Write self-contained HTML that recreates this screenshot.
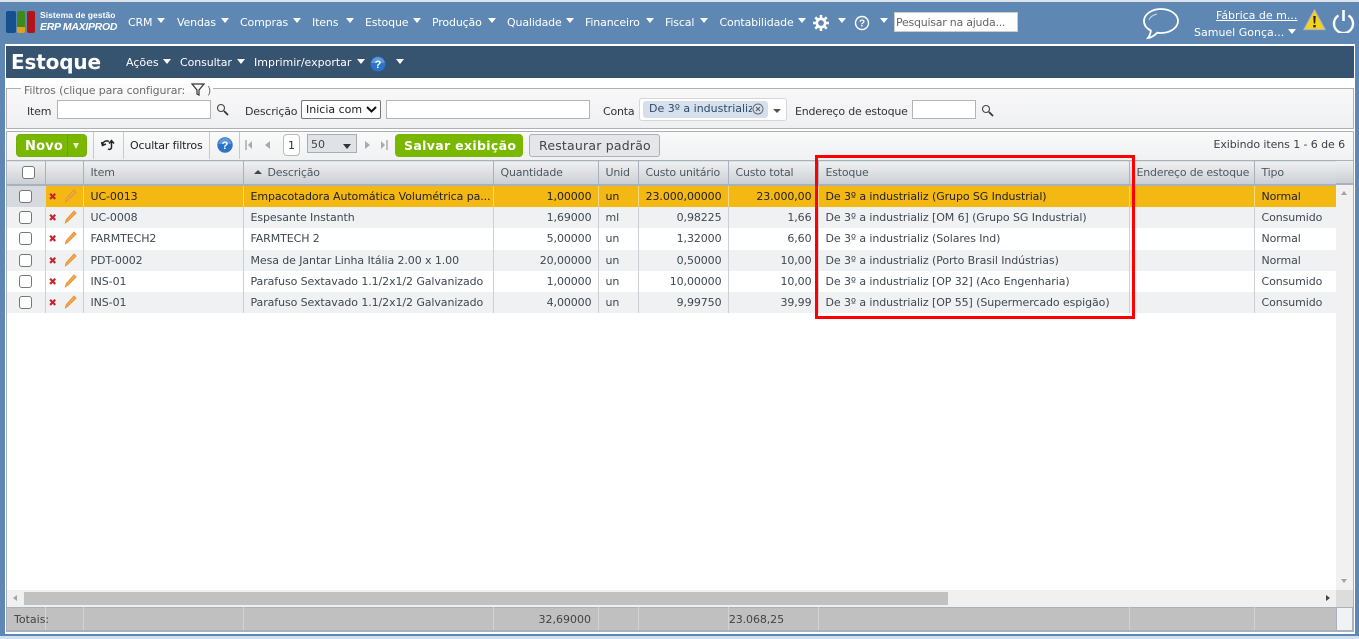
<!DOCTYPE html>
<html lang="pt"><head><meta charset="utf-8"><title>Estoque</title>
<style>
*{box-sizing:border-box}
html,body{margin:0;padding:0;width:1359px;height:639px;overflow:hidden;background:#5e88b3;font-family:"DejaVu Sans","Liberation Sans",sans-serif;font-size:11px;color:#3e4852}
.a{position:absolute}
.t{position:absolute;white-space:nowrap;line-height:14px}
.m{color:#fff;top:16px;letter-spacing:-.15px}
.c{position:absolute;width:0;height:0;border-left:4.5px solid transparent;border-right:4.5px solid transparent;border-top:5px solid #fff}
.s{color:#fff;top:56px}
.l{color:#333;top:105px;letter-spacing:-.2px}
.i{position:absolute;background:#fff;border:1px solid #b4b4b4}
.sep{position:absolute;width:1px;top:132px;height:27px;background:#c6cad0}
table{position:absolute;left:7px;top:160px;width:1329px;border-collapse:collapse;table-layout:fixed}
td,th{padding:0 0 0 7px;white-space:nowrap;overflow:hidden;font-weight:normal;text-align:left;border-right:1px solid #ccd0d6}
td{letter-spacing:-.09px}
th{height:24px;background:linear-gradient(#eff0f2,#cbcfd3);border-right:1px solid #a9b2bc;border-top:1px solid #a9b2bc;border-bottom:2px solid #a9b2bc;color:#4c5864;letter-spacing:-.2px}
td.r{text-align:right;padding:0 6px 0 0}
tr.alt td{background:#f0f1f3}
tr.sel td{background:#f4b813;color:#222;border-right-color:#f7d884}
tr.sel td:first-child{background:#d6d9dd;border-right-color:#d6d9dd}
td:first-child,th:first-child{padding:0}
.cb{display:block;width:13px;height:13px;background:#fff;border:1px solid #777;border-radius:3px;margin-left:12px}
.x{position:absolute;left:3px;top:5px;color:#c1272d;font-size:10px;font-weight:bold;line-height:14px}
td.ac{position:relative;padding:0;overflow:visible}
td.ac svg{position:absolute;left:18px;top:3px}
.tf{position:absolute;top:607px;width:1px;height:23px;background:#d2d2d2}
</style></head><body>
<div class="a" style="left:0;top:0;width:1359px;height:2px;background:#dfe4e9"></div>

<!-- logo -->
<div class="a" style="left:6px;top:11px;width:10px;height:22px;background:#17508f;border-radius:2px"></div>
<div class="a" style="left:17px;top:11px;width:8px;height:16px;background:#3d8a1a;border-radius:2px 2px 0 0"></div>
<div class="a" style="left:17px;top:27px;width:8px;height:6px;background:#e0a21c;border-radius:0 0 2px 2px"></div>
<div class="a" style="left:27px;top:11px;width:8px;height:22px;background:#b3141b;border-radius:2px"></div>
<div class="t" style="left:40px;top:8px;color:#fff;font-size:8.5px;font-family:'Liberation Sans',sans-serif;font-weight:bold;letter-spacing:.05px">Sistema de gestão</div>
<div class="t" style="left:40px;top:20px;color:#fff;font-size:10.5px;font-family:'Liberation Sans',sans-serif;font-style:italic;font-weight:bold;letter-spacing:-.3px">ERP MAXIPROD</div>

<!-- top menu -->
<div class="t m" style="left:128px">CRM</div><div class="c" style="left:157px;top:18px"></div>
<div class="t m" style="left:177px">Vendas</div><div class="c" style="left:221px;top:18px"></div>
<div class="t m" style="left:240px">Compras</div><div class="c" style="left:293px;top:18px"></div>
<div class="t m" style="left:312px">Itens</div><div class="c" style="left:346px;top:18px"></div>
<div class="t m" style="left:365px">Estoque</div><div class="c" style="left:413px;top:18px"></div>
<div class="t m" style="left:432px">Produção</div><div class="c" style="left:488px;top:18px"></div>
<div class="t m" style="left:507px">Qualidade</div><div class="c" style="left:566px;top:18px"></div>
<div class="t m" style="left:585px">Financeiro</div><div class="c" style="left:646px;top:18px"></div>
<div class="t m" style="left:665px">Fiscal</div><div class="c" style="left:700px;top:18px"></div>
<div class="t m" style="left:719.500px">Contabilidade</div><div class="c" style="left:798px;top:18px"></div>
<svg class="a" style="left:813px;top:15px" width="16" height="16" viewBox="0 0 16 16"><circle cx="8" cy="8" r="4.2" fill="none" stroke="#fff" stroke-width="2.6"/><path d="M8 0v3M8 13v3M0 8h3M13 8h3M2.3 2.3l2.1 2.1M11.6 11.6l2.1 2.1M2.3 13.7l2.1-2.1M11.6 4.4l2.1-2.1" stroke="#fff" stroke-width="2.6"/></svg>
<div class="c" style="left:838px;top:18px"></div>
<svg class="a" style="left:854px;top:15px" width="16" height="16" viewBox="0 0 16 16"><circle cx="8" cy="8" r="6.5" fill="none" stroke="#fff" stroke-width="1.4"/><text x="8" y="11.5" font-size="10" font-family="Liberation Sans" font-weight="bold" fill="#fff" text-anchor="middle">?</text></svg>
<div class="c" style="left:880px;top:18px"></div>
<div class="a" style="left:894px;top:12px;width:124px;height:20px;background:#fff;border:1px solid #ccc"></div>
<div class="t" style="left:896px;top:16px;color:#666;letter-spacing:-.25px">Pesquisar na ajuda...</div>

<svg class="a" style="left:1142px;top:7px" width="38" height="33" viewBox="0 0 38 33"><path d="M19 2C9.500 2 2 7.500 2 14c0 4 2.700 7.500 6.800 9.600C8.600 26.500 7.500 29 6 31c3.500-.5 7-3 9.200-5.300 1.200.2 2.500.3 3.800.3 9.500 0 17-5.500 17-12S28.500 2 19 2z" fill="none" stroke="#fff" stroke-width="1.8"/><path d="M7 13c1-3 4-5 8-6" fill="none" stroke="#fff" stroke-width="1" opacity=".7"/></svg>
<div class="t" style="left:1216px;top:9px;color:#fff;text-decoration:underline">Fábrica de m...</div>
<div class="t" style="left:1194px;top:26px;color:#fff">Samuel Gonça...</div>
<div class="c" style="left:1288px;top:29px"></div>
<svg class="a" style="left:1303px;top:9px" width="23" height="22" viewBox="0 0 23 22"><path d="M11.500 1L22 20.500H1z" fill="#f6d21c" stroke="#b8b8b8" stroke-width="1.200"/><path d="M10.300 7h2.400l-.5 7.500h-1.400zM10.300 16h2.400v2.400h-2.400z" fill="#222"/></svg>
<svg class="a" style="left:1332px;top:9px" width="23" height="24" viewBox="0 0 23 24"><path d="M6.500 6.500a9.500 9.500 0 1 0 10 0" fill="none" stroke="#fff" stroke-width="2.400"/><path d="M11.500 1v11" stroke="#fff" stroke-width="2.600"/></svg>

<!-- main panel -->
<div class="a" style="left:5px;top:44px;width:1350px;height:590px;background:#fff"></div>
<div class="a" style="left:6px;top:46px;width:1348px;height:32px;background:#36536f"></div>
<div class="t" style="left:11px;top:50px;color:#fff;font-size:20px;line-height:24px;font-weight:bold;letter-spacing:-.15px;font-family:'DejaVu Sans',sans-serif">Estoque</div>
<div class="t s" style="left:126px">Ações</div><div class="c" style="left:163px;top:59px"></div>
<div class="t s" style="left:180px;letter-spacing:-.1px">Consultar</div><div class="c" style="left:237px;top:59px"></div>
<div class="t s" style="left:254px">Imprimir/exportar</div><div class="c" style="left:357px;top:59px"></div>
<svg class="a" style="left:370px;top:56px" width="16" height="16" viewBox="0 0 16 16"><circle cx="8" cy="8" r="7.500" fill="#2b74c8"/><path d="M1.500 7a6.500 6 0 0 1 13 0z" fill="#7fb2e8" opacity=".6"/><text x="8" y="12" font-size="11" font-family="Liberation Sans" font-weight="bold" fill="#fff" text-anchor="middle">?</text></svg>
<div class="c" style="left:396px;top:59px"></div>

<!-- filters -->
<div class="a" style="left:6px;top:88px;width:1348px;height:41px;border:1px solid #aeb0b2;background:linear-gradient(#f8f8f9,#eff0f2)"></div>
<div class="a" style="left:21px;top:84px;width:192px;height:8px;background:#fbfbfb"></div>
<div class="t" style="left:24px;top:84px;color:#6b6b6b;letter-spacing:-.13px">Filtros (clique para configurar:</div>
<svg class="a" style="left:191px;top:83px" width="14" height="13" viewBox="0 0 14 13"><path d="M1 1h12L8 7v5L6 11V7z" fill="none" stroke="#333" stroke-width="1.200"/></svg>
<div class="t" style="left:207px;top:84px;color:#6b6b6b">)</div>
<div class="t l" style="left:27px">Item</div>
<div class="i" style="left:57px;top:100px;width:154px;height:19px"></div>
<svg class="a" style="left:216px;top:103px" width="13" height="13" viewBox="0 0 13 13"><circle cx="5" cy="5" r="3.500" fill="none" stroke="#444" stroke-width="1.100"/><path d="M8 8l4 4" stroke="#333" stroke-width="1.800"/></svg>
<div class="t l" style="left:245px">Descrição</div>
<div class="a" style="left:301px;top:100px;width:80px;height:19px;background:#fff;border:1px solid #767676;border-radius:2px"></div>
<div class="t" style="left:306px;top:103px;color:#222">Inicia com</div>
<svg class="a" style="left:366px;top:106px" width="11" height="7" viewBox="0 0 11 7"><path d="M1 1l4.500 4.500L10 1" fill="none" stroke="#111" stroke-width="2"/></svg>
<div class="i" style="left:386px;top:100px;width:204px;height:19px"></div>
<div class="t l" style="left:603px">Conta</div>
<div class="a" style="left:639px;top:98px;width:148px;height:23px;background:#fff;border:1px solid #d4d6d9;border-radius:3px"></div>
<div class="a" style="left:643px;top:101px;width:125px;height:17px;background:#d6e0ec;border-radius:3px"></div>
<div class="t" style="left:649px;top:102px;color:#2f4a6b;width:103px;overflow:hidden">De 3º a industrializ</div>
<svg class="a" style="left:752px;top:103px" width="12" height="12" viewBox="0 0 12 12"><circle cx="6" cy="6" r="5" fill="none" stroke="#667" stroke-width="1"/><path d="M4 4l4 4M8 4l-4 4" stroke="#556" stroke-width="1"/></svg>
<div class="a" style="left:773px;top:109px;width:0;height:0;border-left:4.500px solid transparent;border-right:4.500px solid transparent;border-top:4px solid #555"></div>
<div class="t l" style="left:795px">Endereço de estoque</div>
<div class="i" style="left:912px;top:100px;width:64px;height:19px"></div>
<svg class="a" style="left:981px;top:104px" width="13" height="13" viewBox="0 0 13 13"><circle cx="5" cy="5" r="3.500" fill="none" stroke="#444" stroke-width="1.100"/><path d="M8 8l4 4" stroke="#333" stroke-width="1.800"/></svg>

<!-- grid frame -->
<div class="a" style="left:6px;top:131px;width:1348px;height:501px;border:1px solid #a9b2bc;border-bottom:2px solid #a9b2bc"></div>
<div class="a" style="left:7px;top:132px;width:1346px;height:28px;background:linear-gradient(#fafafa,#f0f1f3)"></div>

<!-- toolbar -->
<div class="a" style="left:16px;top:134px;width:71px;height:23px;background:#7ab800;border-radius:4px;border:1px solid #76ad0a"></div>
<div class="a" style="left:67px;top:135px;width:1px;height:21px;background:#6a9f00"></div>
<div class="t" style="left:25px;top:139px;color:#fff;font-weight:bold;font-size:13px;line-height:15px;letter-spacing:.2px">Novo</div>
<div class="a" style="left:73px;top:143px;width:0;height:0;border-left:3.500px solid transparent;border-right:3.500px solid transparent;border-top:6px solid #eaf5cc"></div>
<div class="sep" style="left:93px"></div><div class="sep" style="left:123px"></div><div class="sep" style="left:209px"></div><div class="sep" style="left:239px"></div>
<svg class="a" style="left:101px;top:138px" width="15" height="14" viewBox="0 0 15 14"><path d="M1.500 7C2 3.500 5 2 8 3.500M.5 4l1 3.500L5 6" fill="none" stroke="#222" stroke-width="1.500"/><path d="M7 11c2 1 3.500 0 3.500-2V3M8 5.500L10.500 2.500 13 5.500" fill="none" stroke="#222" stroke-width="1.500"/></svg>
<div class="t" style="left:130px;top:139px;color:#222;letter-spacing:-.15px">Ocultar filtros</div>
<svg class="a" style="left:217px;top:137px" width="16" height="16" viewBox="0 0 16 16"><circle cx="8" cy="8" r="7.700" fill="#2b74c8"/><path d="M1.500 7a6.500 6 0 0 1 13 0z" fill="#7fb2e8" opacity=".6"/><text x="8" y="12" font-size="11" font-family="Liberation Sans" font-weight="bold" fill="#fff" text-anchor="middle">?</text></svg>
<svg class="a" style="left:245px;top:140px" width="8" height="10" viewBox="0 0 8 10"><path d="M1 0v10" stroke="#aaa" stroke-width="1.500"/><path d="M7 1v8L3 5z" fill="#aaa"/></svg>
<svg class="a" style="left:264px;top:140px" width="7" height="10" viewBox="0 0 7 10"><path d="M6 1v8L1 5z" fill="#aaa"/></svg>
<div class="a" style="left:283px;top:134px;width:17px;height:22px;background:#fff;border:1px solid #bbb;border-radius:4px"></div>
<div class="t" style="left:288px;top:139px;color:#333">1</div>
<div class="a" style="left:307px;top:134px;width:50px;height:19px;background:#dfe2e6;border:1px solid #a9adb2"></div>
<div class="t" style="left:311px;top:138px;color:#444">50</div>
<div class="a" style="left:343px;top:144px;width:0;height:0;border-left:4.500px solid transparent;border-right:4.500px solid transparent;border-top:5px solid #333"></div>
<svg class="a" style="left:364px;top:140px" width="7" height="10" viewBox="0 0 7 10"><path d="M1 1v8l5-4z" fill="#aaa"/></svg>
<svg class="a" style="left:380px;top:140px" width="8" height="10" viewBox="0 0 8 10"><path d="M1 1v8l4-4z" fill="#aaa"/><path d="M7 0v10" stroke="#aaa" stroke-width="1.500"/></svg>
<div class="a" style="left:395px;top:134px;width:128px;height:23px;background:#7ab800;border-radius:4px"></div>
<div class="t" style="left:404px;top:138px;color:#fff;font-weight:bold;font-size:12.500px;line-height:15px;letter-spacing:.33px">Salvar exibição</div>
<div class="a" style="left:529px;top:134px;width:131px;height:23px;background:#e4e6e9;border:1px solid #aeb1b5;border-radius:3px"></div>
<div class="t" style="left:539px;top:138px;color:#444;font-size:12.500px;line-height:15px;letter-spacing:.2px">Restaurar padrão</div>
<div class="t" style="right:14px;top:138px;color:#3d3d4a;letter-spacing:-.09px">Exibindo itens 1 - 6 de 6</div>

<!-- table -->
<table>
<colgroup><col style="width:38px"><col style="width:38px"><col style="width:160px"><col style="width:250px"><col style="width:105px"><col style="width:40px"><col style="width:90px"><col style="width:90px"><col style="width:311px"><col style="width:125px"><col style="width:82px"></colgroup>
<tr><th><span class="cb" style="margin-left:15px;margin-top:1px"></span></th><th></th><th>Item</th><th><span style="display:inline-block;width:0;height:0;border-left:4px solid transparent;border-right:4px solid transparent;border-bottom:4px solid #444;margin:0 6px 2px 3px"></span>Descrição</th><th>Quantidade</th><th>Unid</th><th>Custo unitário</th><th>Custo total</th><th>Estoque</th><th>Endereço de estoque</th><th>Tipo</th></tr>
<tr class="sel" style="height:22px"><td><span class="cb"></span></td><td class="ac"><span class="x">✖</span><svg width="13" height="14" viewBox="0 0 14 16"><path d="M1 15l1-4L11 1l2.500 2.500L4 13z" fill="#f0a84a" stroke="#e08f2c" stroke-width=".8"/></svg></td><td>UC-0013</td><td>Empacotadora Automática Volumétrica pa...</td><td class="r">1,00000</td><td>un</td><td class="r">23.000,00000</td><td class="r">23.000,00</td><td>De 3º a industrializ (Grupo SG Industrial)</td><td></td><td>Normal</td></tr>
<tr class="alt" style="height:21px"><td><span class="cb"></span></td><td class="ac"><span class="x">✖</span><svg width="13" height="14" viewBox="0 0 14 16"><path d="M1 15l1-4L11 1l2.500 2.500L4 13z" fill="#f0a84a" stroke="#e08f2c" stroke-width=".8"/></svg></td><td>UC-0008</td><td>Espesante Instanth</td><td class="r">1,69000</td><td>ml</td><td class="r">0,98225</td><td class="r">1,66</td><td>De 3º a industrializ [OM 6] (Grupo SG Industrial)</td><td></td><td>Consumido</td></tr>
<tr style="height:22px"><td><span class="cb"></span></td><td class="ac"><span class="x">✖</span><svg width="13" height="14" viewBox="0 0 14 16"><path d="M1 15l1-4L11 1l2.500 2.500L4 13z" fill="#f0a84a" stroke="#e08f2c" stroke-width=".8"/></svg></td><td>FARMTECH2</td><td>FARMTECH 2</td><td class="r">5,00000</td><td>un</td><td class="r">1,32000</td><td class="r">6,60</td><td>De 3º a industrializ (Solares Ind)</td><td></td><td>Normal</td></tr>
<tr class="alt" style="height:21px"><td><span class="cb"></span></td><td class="ac"><span class="x">✖</span><svg width="13" height="14" viewBox="0 0 14 16"><path d="M1 15l1-4L11 1l2.500 2.500L4 13z" fill="#f0a84a" stroke="#e08f2c" stroke-width=".8"/></svg></td><td>PDT-0002</td><td>Mesa de Jantar Linha Itália 2.00 x 1.00</td><td class="r">20,00000</td><td>un</td><td class="r">0,50000</td><td class="r">10,00</td><td>De 3º a industrializ (Porto Brasil Indústrias)</td><td></td><td>Normal</td></tr>
<tr style="height:21px"><td><span class="cb"></span></td><td class="ac"><span class="x">✖</span><svg width="13" height="14" viewBox="0 0 14 16"><path d="M1 15l1-4L11 1l2.500 2.500L4 13z" fill="#f0a84a" stroke="#e08f2c" stroke-width=".8"/></svg></td><td>INS-01</td><td>Parafuso Sextavado 1.1/2x1/2 Galvanizado</td><td class="r">1,00000</td><td>un</td><td class="r">10,00000</td><td class="r">10,00</td><td>De 3º a industrializ [OP 32] (Aco Engenharia)</td><td></td><td>Consumido</td></tr>
<tr class="alt" style="height:21px"><td><span class="cb"></span></td><td class="ac"><span class="x">✖</span><svg width="13" height="14" viewBox="0 0 14 16"><path d="M1 15l1-4L11 1l2.500 2.500L4 13z" fill="#f0a84a" stroke="#e08f2c" stroke-width=".8"/></svg></td><td>INS-01</td><td>Parafuso Sextavado 1.1/2x1/2 Galvanizado</td><td class="r">4,00000</td><td>un</td><td class="r">9,99750</td><td class="r">39,99</td><td>De 3º a industrializ [OP 55] (Supermercado espigão)</td><td></td><td>Consumido</td></tr>
</table>
<div class="a" style="left:1336px;top:160px;width:17px;height:25px;background:linear-gradient(#eff0f2,#cbcfd3);border-top:1px solid #a9b2bc;border-bottom:2px solid #a9b2bc"></div>

<!-- vertical scrollbar -->
<div class="a" style="left:1336px;top:185px;width:17px;height:405px;background:#f1f1f1"></div>
<div class="a" style="left:1341px;top:191px;width:0;height:0;border-left:3.500px solid transparent;border-right:3.500px solid transparent;border-bottom:4px solid #a3a3a3"></div>
<div class="a" style="left:1341px;top:579px;width:0;height:0;border-left:3.500px solid transparent;border-right:3.500px solid transparent;border-top:4px solid #a3a3a3"></div>

<!-- horizontal scrollbar -->
<div class="a" style="left:7px;top:590px;width:1329px;height:17px;background:#f0f0f0"></div>
<div class="a" style="left:24px;top:592px;width:924px;height:13px;background:#c1c1c1"></div>
<div class="a" style="left:13px;top:595px;width:0;height:0;border-top:3.500px solid transparent;border-bottom:3.500px solid transparent;border-right:4px solid #a3a3a3"></div>
<div class="a" style="left:1326px;top:595px;width:0;height:0;border-top:3.500px solid transparent;border-bottom:3.500px solid transparent;border-left:4px solid #444"></div>
<div class="a" style="left:1336px;top:590px;width:17px;height:17px;background:#dcdcdc"></div>

<!-- totals -->
<div class="a" style="left:7px;top:607px;width:1329px;height:25px;background:#c0c0c0;border-top:1px solid #a9b2bc;border-bottom:2px solid #a9b2bc"></div>
<div class="a" style="left:1336px;top:607px;width:17px;height:25px;background:#f0f2f5;border:1px solid #a9b2bc;border-bottom-width:2px"></div>
<div class="tf" style="left:45px"></div><div class="tf" style="left:83px"></div><div class="tf" style="left:243px"></div><div class="tf" style="left:493px"></div><div class="tf" style="left:598px"></div><div class="tf" style="left:638px"></div><div class="tf" style="left:728px"></div><div class="tf" style="left:818px"></div><div class="tf" style="left:1129px"></div><div class="tf" style="left:1254px"></div>
<div class="t" style="left:14px;top:613px;color:#444">Totais:</div>
<div class="t" style="right:768px;top:613px;color:#444">32,69000</div>
<div class="t" style="right:575px;top:613px;color:#444;letter-spacing:-.09px">23.068,25</div>

<!-- red highlight -->
<div class="a" style="left:815px;top:155px;width:320px;height:164px;border:3px solid #f00"></div>

<div class="a" style="left:0;top:636px;width:1359px;height:3px;background:#cfe0ee"></div>
</body></html>
